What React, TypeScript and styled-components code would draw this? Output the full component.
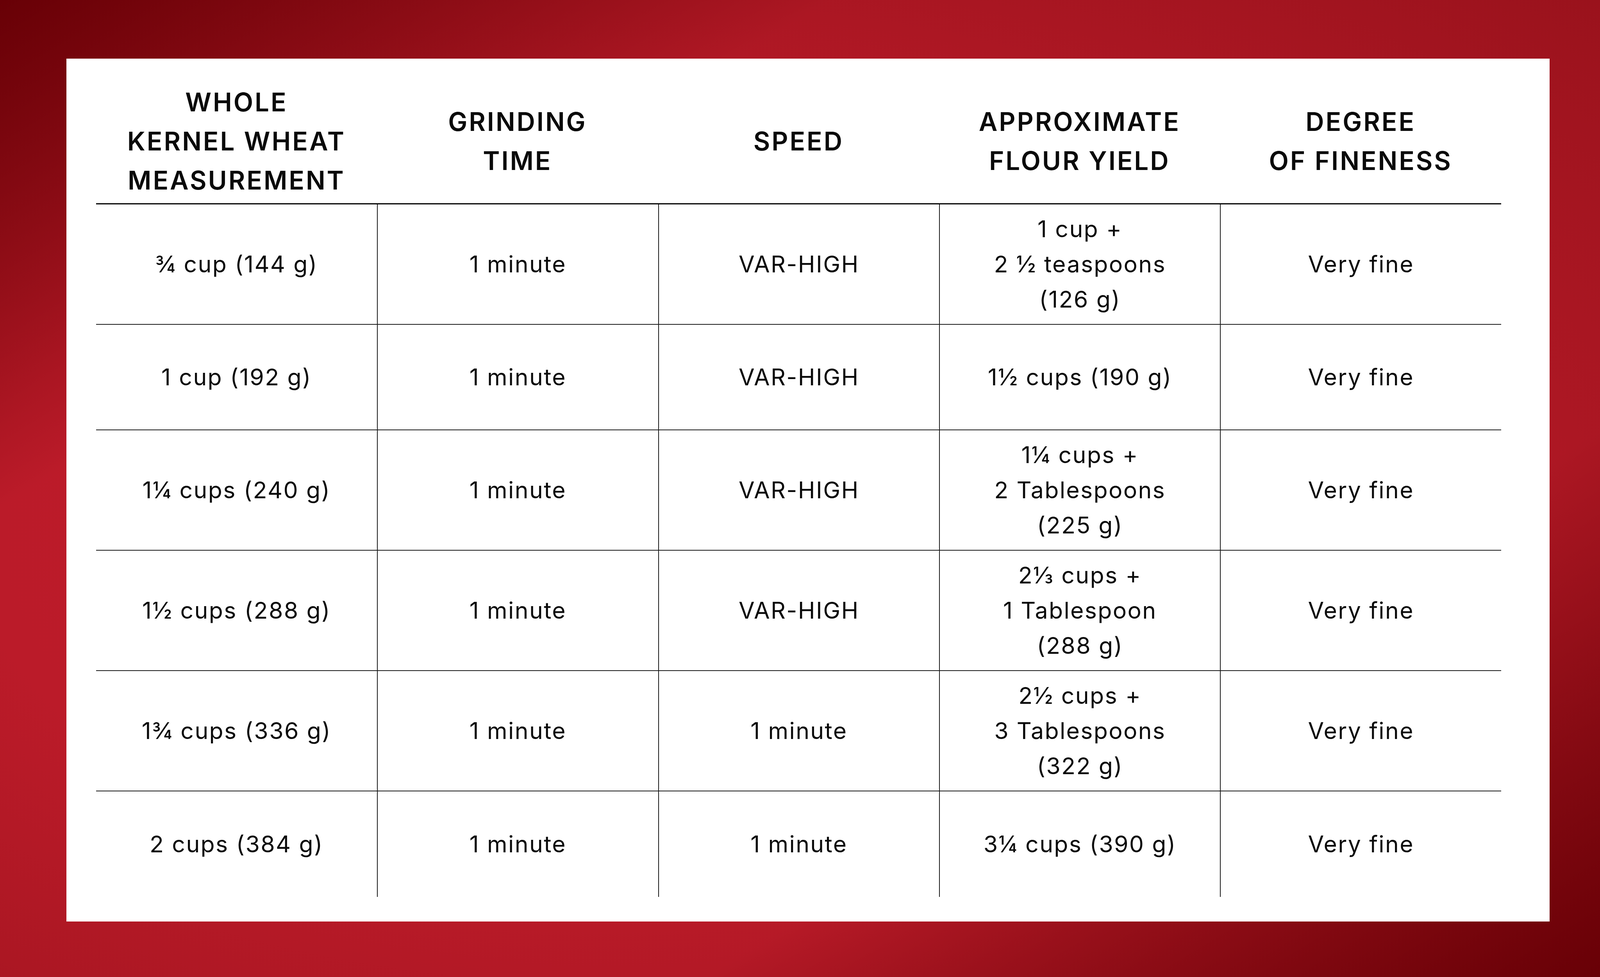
import React from "react";
import styled, { createGlobalStyle } from "styled-components";

// design pixels of the 5000×2500 artboard, stretched to the window
const x = (n: number) => `calc(${n} * var(--ux))`;
const y = (n: number) => `calc(${n} * var(--uy))`;
const f = (n: number) => `calc(${n} * var(--uf))`;

const GlobalStyle = createGlobalStyle`
  :root {
    --ux: calc(100vw / 5000);
    --uy: calc(100vh / 2500);
    --uf: min(calc(100vw / 5000), calc(100vh / 2500));
  }
  html, body {
    margin: 0;
    padding: 0;
    overflow: hidden;
  }
  body {
    font-family: Inter, "Liberation Sans", sans-serif;
    color: #0a0a0a;
  }
`;

const Page = styled.div`
  box-sizing: border-box;
  width: 100vw;
  height: 100vh;
  padding: ${y(150)} ${x(158)} ${y(142)} ${x(207)};
  background:
    linear-gradient(to bottom right, rgba(104, 0, 6, 1) 0%, rgba(104, 0, 6, 0) 26%, rgba(104, 0, 6, 0) 72%, rgba(104, 0, 6, 1) 100%),
    radial-gradient(ellipse at 38% 55%, #c01c2c 0%, #bb1b29 45%, #9a121c 100%);
`;

const Panel = styled.div`
  box-sizing: border-box;
  width: 100%;
  height: 100%;
  background: #ffffff;
  padding: ${y(53)} ${x(151)} ${y(70)} ${x(93)};
`;

const Grid = styled.div`
  display: grid;
  grid-template-columns: repeat(5, minmax(0, 1fr));
  width: 100%;
`;

const HeadCell = styled.div`
  box-sizing: border-box;
  height: ${y(320)};
  display: flex;
  align-items: center;
  justify-content: center;
  text-align: center;
  border-bottom: ${y(3)} solid #000;
  font-size: ${f(80)};
  font-weight: 600;
  line-height: ${y(100)};
  letter-spacing: 0.06em;
  text-transform: uppercase;
  white-space: pre-line;
`;

const Cell = styled.div<{ $first: boolean; $last: boolean }>`
  box-sizing: border-box;
  min-height: ${y(270)};
  padding: ${y(18)} ${x(10)};
  display: flex;
  flex-direction: column;
  align-items: center;
  justify-content: center;
  text-align: center;
  font-size: ${f(72)};
  font-weight: 400;
  line-height: ${y(90)};
  letter-spacing: 0.04em;
  border-left: ${(p) => (p.$first ? "none" : `${x(2.5)} solid #1a1a1a`)};
  border-bottom: ${(p) => (p.$last ? "none" : `${y(2.5)} solid #1a1a1a`)};
`;

const Line = styled.span`
  display: block;
  white-space: nowrap;
`;

const headers = [
  "Whole\nkernel wheat\nmeasurement",
  "Grinding\ntime",
  "Speed",
  "Approximate\nflour yield",
  "Degree\nof fineness",
];

type Value = string | string[];

const rows: Value[][] = [
  ["¾ cup (144 g)", "1 minute", "VAR-HIGH", ["1 cup +", "2 ½ teaspoons", "(126 g)"], "Very fine"],
  ["1 cup (192 g)", "1 minute", "VAR-HIGH", "1½ cups (190 g)", "Very fine"],
  ["1¼ cups (240 g)", "1 minute", "VAR-HIGH", ["1¼ cups +", "2 Tablespoons", "(225 g)"], "Very fine"],
  ["1½ cups (288 g)", "1 minute", "VAR-HIGH", ["2⅓ cups +", "1 Tablespoon", "(288 g)"], "Very fine"],
  ["1¾ cups (336 g)", "1 minute", "1 minute", ["2½ cups +", "3 Tablespoons", "(322 g)"], "Very fine"],
  ["2 cups (384 g)", "1 minute", "1 minute", "3¼ cups (390 g)", "Very fine"],
];

const App = () => {
  return (
    <>
      <GlobalStyle />
      <Page>
        <Panel>
          <Grid>
            {headers.map((h) => (
              <HeadCell key={h}>{h}</HeadCell>
            ))}
            {rows.map((row, r) =>
              row.map((value, c) => (
                <Cell key={`${r}-${c}`} $first={c === 0} $last={r === rows.length - 1}>
                  {(Array.isArray(value) ? value : [value]).map((line) => (
                    <Line key={line}>{line}</Line>
                  ))}
                </Cell>
              ))
            )}
          </Grid>
        </Panel>
      </Page>
    </>
  );
};

export default App;
